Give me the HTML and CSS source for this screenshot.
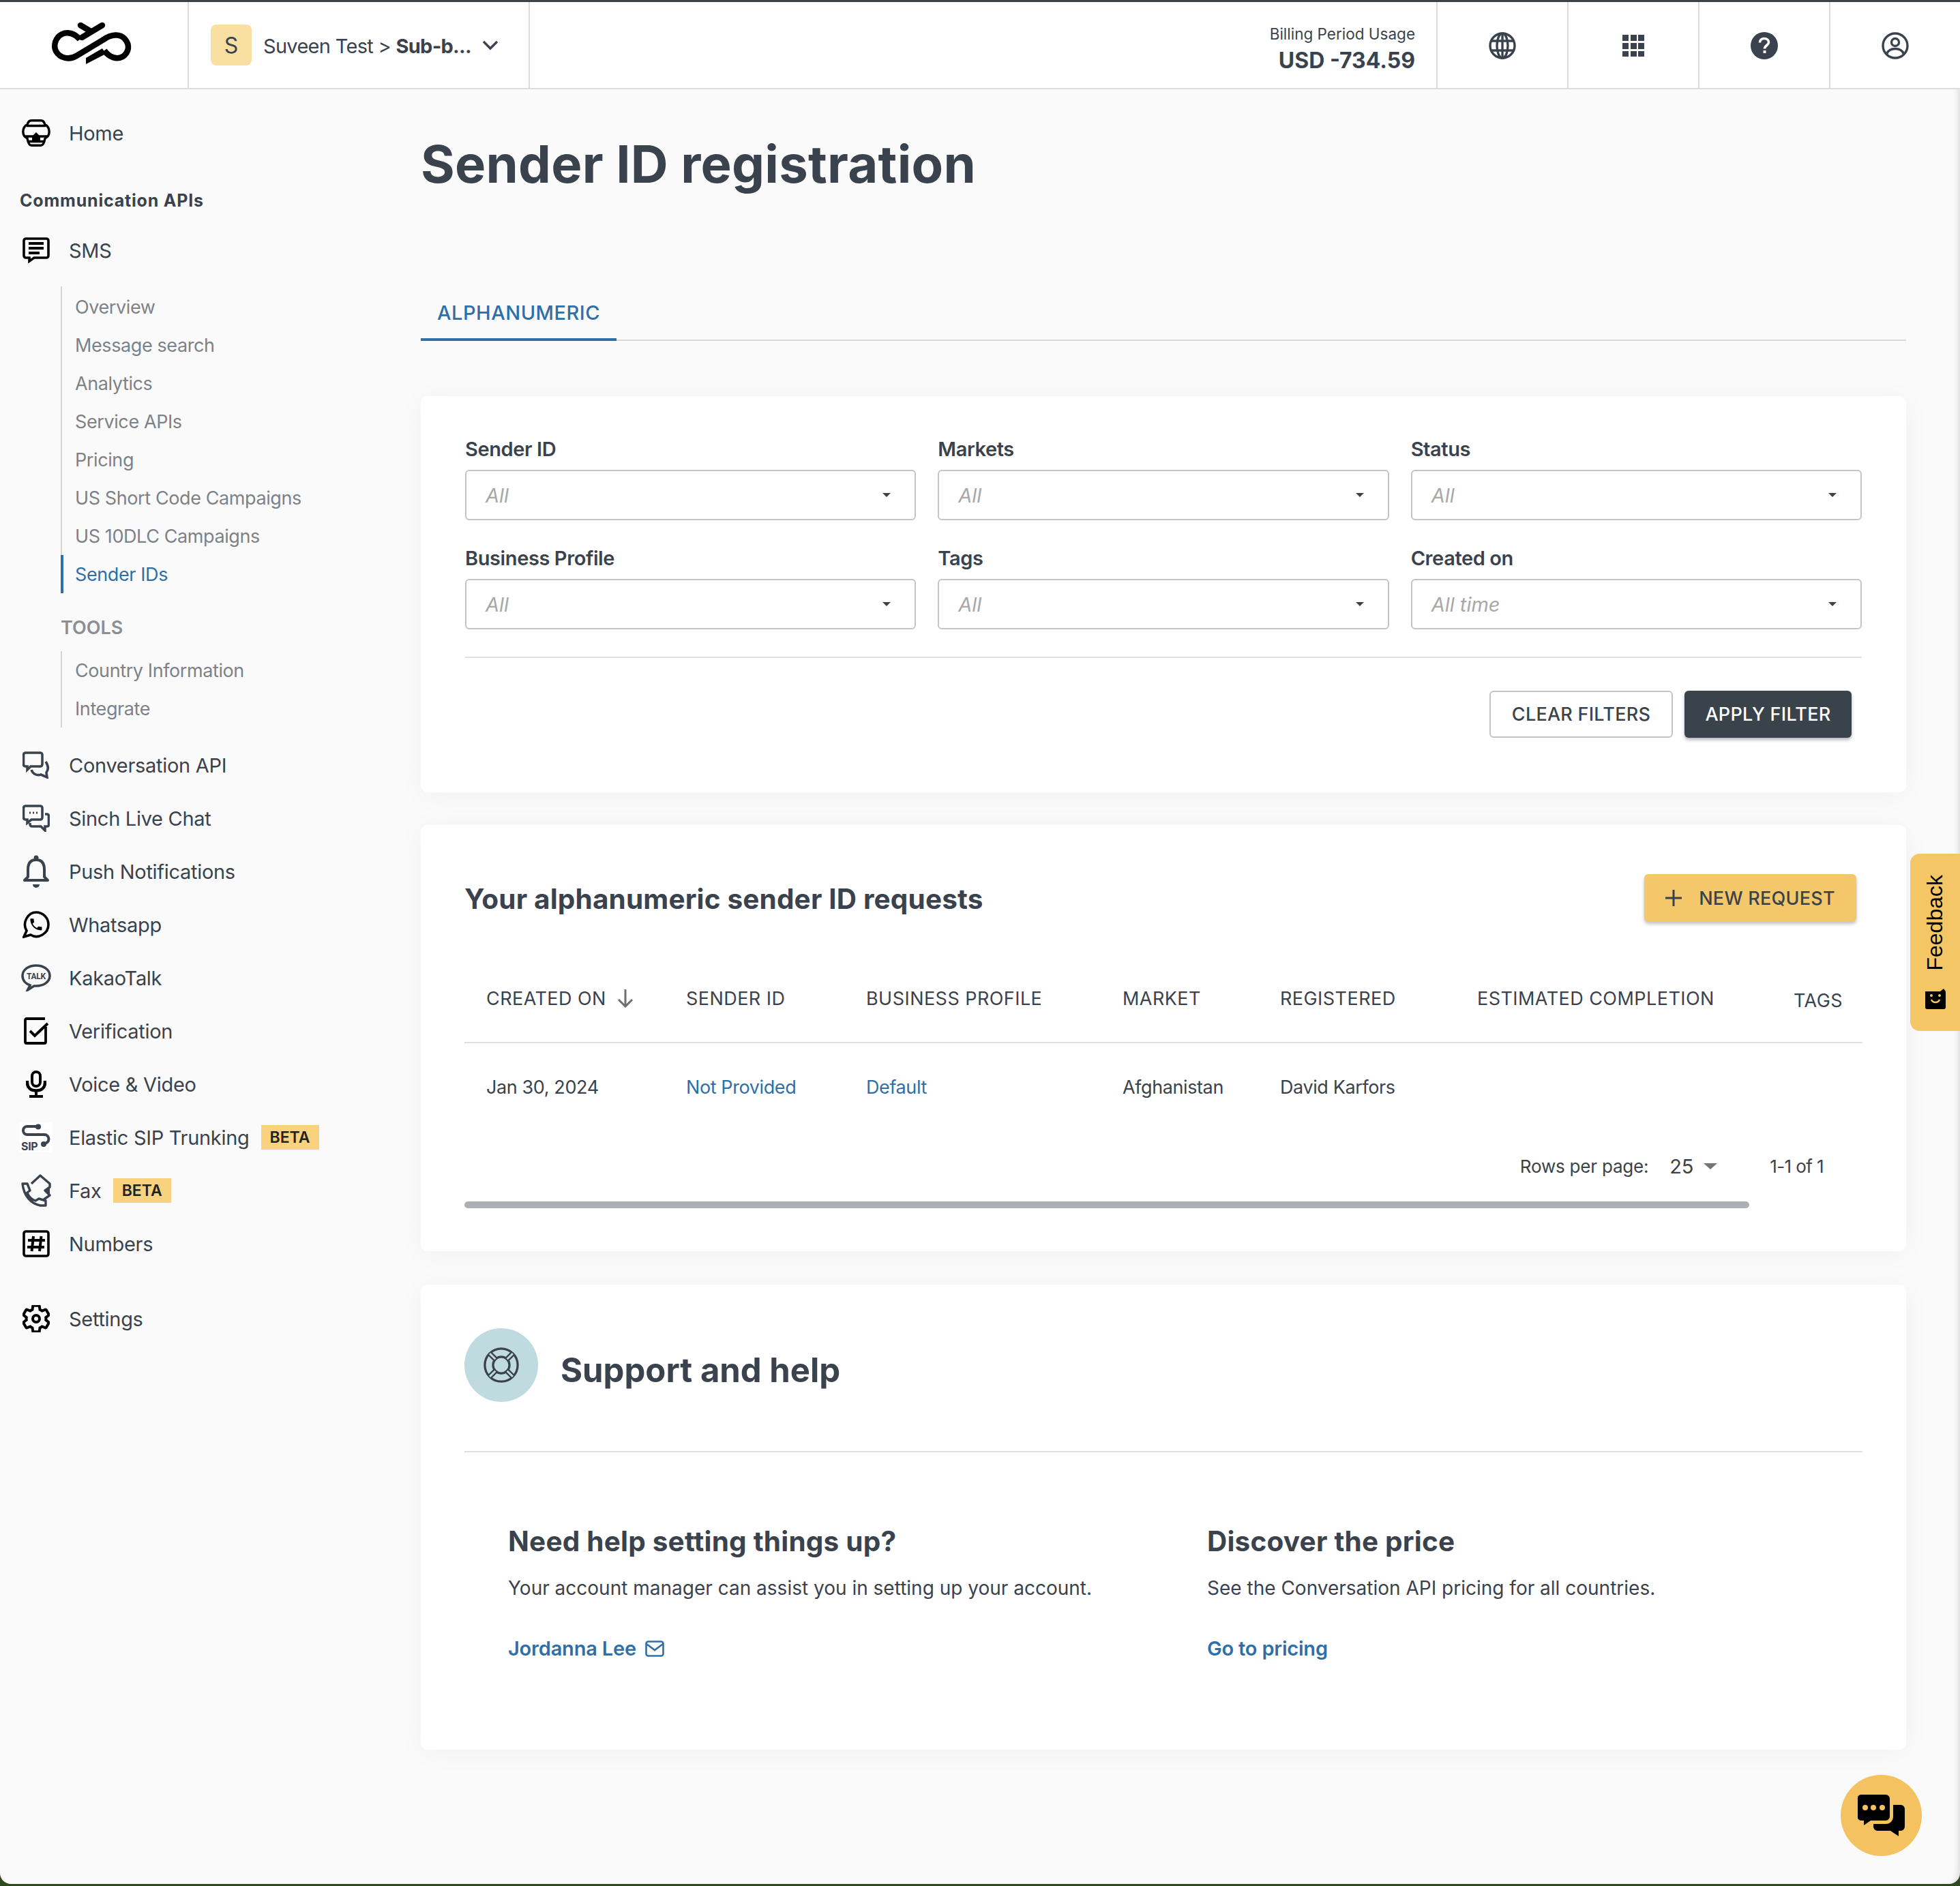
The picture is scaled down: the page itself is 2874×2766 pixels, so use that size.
FILE: index.html
```html
<!DOCTYPE html>
<html lang="en">
<head>
  <meta charset="UTF-8">
  <title>Sender ID registration</title>
  <link rel="stylesheet" href="styles.css">
</head>
<body>
<div class="app">
  <header class="topbar">
    <div class="logo-cell">
      <svg class="logo" viewBox="0 0 160 90" width="160" height="90" fill="none" stroke="#000" stroke-width="8.500">
        <path d="M59 36C52 27 41 24 33 28C23 33 20 45 24 53C30 64 44 66 54 60L94 36C105 28 118 27 125 35C133 44 131 55 122 61C113 66 102 62 95 52"/>
        <path d="M92 15L62 33" stroke-linecap="round"/>
        <path d="M60 15L75 24" stroke-linecap="round"/>
        <path d="M68 63L92 49L97 57L68 72Z" fill="#000" stroke="none"/>
      </svg>
    </div>
    <div class="account-cell">
      <span class="account-avatar">S</span>
      <span class="account-name">Suveen Test &gt; <b>Sub-b...</b></span>
      <svg class="account-chevron" viewBox="0 0 24 16" width="24" height="16" fill="none" stroke="#3a434d" stroke-width="3.400"><path d="M2 3L12 13L22 3"/></svg>
    </div>
    <div class="usage">
      <div class="usage-label">Billing Period Usage</div>
      <div class="usage-value">USD -734.59</div>
    </div>
    <div class="top-icon">
      <svg viewBox="0 0 40 40" width="40" height="40" fill="none" stroke="#3a434d" stroke-width="3.400"><circle cx="20" cy="20" r="18"/><ellipse cx="20" cy="20" rx="8" ry="18"/><path d="M3 13H37M3 27H37M20 2V38"/></svg>
    </div>
    <div class="top-icon">
      <svg viewBox="0 0 32 32" width="32" height="32" fill="#3a434d"><rect width="9" height="9"/><rect x="12" width="9" height="9"/><rect x="23" width="9" height="9"/><rect y="12" width="9" height="9"/><rect x="12" y="12" width="9" height="9"/><rect x="23" y="12" width="9" height="9"/><rect y="24" width="9" height="8"/><rect x="12" y="24" width="9" height="8"/><rect x="23" y="24" width="9" height="8"/></svg>
    </div>
    <div class="top-icon">
      <svg viewBox="0 0 40 40" width="40" height="40"><circle cx="20" cy="20" r="20" fill="#3a434d"/><path d="M13.500 15.500C13.500 11.500 16.500 9.500 20 9.500C24 9.500 26.500 12 26.500 15C26.500 19.500 20.500 19.500 20.500 24.500" fill="none" stroke="#fff" stroke-width="3.600"/><rect x="18.500" y="27" width="4" height="4" fill="#fff"/></svg>
    </div>
    <div class="top-icon">
      <svg viewBox="0 0 40 40" width="40" height="40" fill="none" stroke="#3a434d" stroke-width="3.400"><circle cx="20" cy="20" r="18"/><circle cx="20" cy="15" r="5.500"/><path d="M7.500 32C10 26 15 24.500 20 24.500C25 24.500 30 26 32.500 32"/></svg>
    </div>
  </header>

  <div class="body-row">
    <nav class="sidebar">
      <a class="nav-item">
        <span class="nav-icon">
          <svg viewBox="0 0 42 40" width="42" height="40" fill="none" stroke="#000" stroke-width="3.400"><path d="M14 1.800H28C31 1.800 33 4 34 8C38 9 40.200 14 40.200 18C40.200 22 38 26 34 28C33 34 31 38.200 28 38.200H14C11 38.200 9 34 8 28C4 26 1.800 22 1.800 18C1.800 14 4 9 8 8C9 4 11 1.800 14 1.800Z"/><path d="M7 9.500H35M5 25H37M9 32.500H33"/><path d="M15 33V25L21 19L27 25V33Z" fill="#000" stroke="none"/></svg>
        </span>
        Home
      </a>
      <h4 class="nav-heading">Communication APIs</h4>
      <a class="nav-item">
        <span class="nav-icon">
          <svg viewBox="0 0 40 38" width="40" height="38" fill="none" stroke="#000" stroke-width="3.600"><path d="M5 2H35A3 3 0 0 1 38 5V27A3 3 0 0 1 35 30H17L10 35V30H5A3 3 0 0 1 2 27V5A3 3 0 0 1 5 2Z"/><path d="M9 9H31M9 16H31M9 23H25" stroke-width="3.800"/></svg>
        </span>
        SMS
      </a>
      <div class="subnav subnav-sms">
        <a class="sub-item">Overview</a>
        <a class="sub-item">Message search</a>
        <a class="sub-item">Analytics</a>
        <a class="sub-item">Service APIs</a>
        <a class="sub-item">Pricing</a>
        <a class="sub-item">US Short Code Campaigns</a>
        <a class="sub-item">US 10DLC Campaigns</a>
        <a class="sub-item active">Sender IDs</a>
      </div>
      <div class="tools-label">TOOLS</div>
      <div class="subnav">
        <a class="sub-item">Country Information</a>
        <a class="sub-item">Integrate</a>
      </div>
      <div class="nav-group">
        <a class="nav-item">
          <span class="nav-icon">
            <svg viewBox="0 0 40 40" width="40" height="40" fill="none" stroke="#3a434d" stroke-width="3.600"><path d="M4 2H26A3 3 0 0 1 29 5V19A3 3 0 0 1 26 22H12L7 27V22H4A3 3 0 0 1 1.500 19V5A3 3 0 0 1 4 2Z"/><path d="M13 27C15 33 21 36 27 34L36 38L35 31C38 27 38 21 34 15"/></svg>
          </span>
          Conversation API
        </a>
        <a class="nav-item">
          <span class="nav-icon">
            <svg viewBox="0 0 40 40" width="40" height="40" fill="none" stroke="#3a434d" stroke-width="3.600"><path d="M4 2H26A3 3 0 0 1 29 5V19A3 3 0 0 1 26 22H13L7 27V22H4A3 3 0 0 1 1.500 19V5A3 3 0 0 1 4 2Z"/><path d="M10 12H12M15 12H17M20 12H22" stroke-width="3"/><path d="M33 14H36A2.500 2.500 0 0 1 38.500 16.500V30A2.500 2.500 0 0 1 36 32H33V38L27 32H14A3 3 0 0 1 11 29V27"/></svg>
          </span>
          Sinch Live Chat
        </a>
        <a class="nav-item">
          <span class="nav-icon">
            <svg viewBox="0 0 38 48" width="38" height="48" fill="none" stroke="#3a434d" stroke-width="4"><path d="M19 7C10 7 7 13 7 21V32L2 37H36L31 32V21C31 13 28 7 19 7Z" stroke-linejoin="round"/><circle cx="19" cy="4" r="3.500" fill="#3a434d" stroke="none"/><path d="M14 43H24A5 5 0 0 1 14 43Z" fill="#3a434d" stroke="none"/></svg>
          </span>
          Push Notifications
        </a>
        <a class="nav-item">
          <span class="nav-icon">
            <svg viewBox="0 0 40 40" width="40" height="40"><path d="M6 29C-1 17 8 2 20 2C30 2 38 10 38 20C38 33 23 42 12 35L2 38Z" fill="none" stroke="#000" stroke-width="3.600"/><path transform="translate(8.500 8.500) scale(.95)" d="M6.620 10.790c1.440 2.830 3.760 5.140 6.590 6.590l2.200-2.200c.27-.27.67-.36 1.020-.24 1.120.37 2.330.57 3.570.57.550 0 1 .45 1 1V20c0 .55-.45 1-1 1-9.390 0-17-7.610-17-17 0-.55.45-1 1-1h3.500c.55 0 1 .45 1 1 0 1.250.2 2.450.57 3.570.11.35.03.74-.25 1.020l-2.200 2.200z"/></svg>
          </span>
          Whatsapp
        </a>
        <a class="nav-item">
          <span class="nav-icon">
            <svg viewBox="0 0 44 40" width="44" height="40"><path d="M22 2C11 2 2 8 2 17C2 24 7 29 13 31L9.500 38L19 32H22C33 32 42 26 42 17C42 8 33 2 22 2Z" fill="none" stroke="#3a434d" stroke-width="3.600"/><text class="kakao-text" x="22" y="21.500" text-anchor="middle">TALK</text></svg>
          </span>
          KakaoTalk
        </a>
        <a class="nav-item">
          <span class="nav-icon">
            <svg class="check-icon" viewBox="0 0 38 40" width="38" height="40" fill="none" stroke="#000" stroke-width="3.800"><path d="M32 14V36A2 2 0 0 1 30 38H4A2 2 0 0 1 2 36V4A2 2 0 0 1 4 2H31"/><path d="M9 20L16 27L35 9" stroke-width="4"/></svg>
          </span>
          Verification
        </a>
        <a class="nav-item">
          <span class="nav-icon">
            <svg viewBox="0 0 30 40" width="30" height="40"><path d="M15 0A8 8 0 0 0 7 8V17A8 8 0 0 0 23 17V8A8 8 0 0 0 15 0ZM15 4A4 4 0 0 1 19 8V17A4 4 0 0 1 11 17V8A4 4 0 0 1 15 4Z"/><path d="M2 15V18C2 26 8 29.500 15 29.500C22 29.500 28 26 28 18V15" fill="none" stroke="#000" stroke-width="4.500"/><path d="M13 28H17V36H25V40H5V36H13Z"/></svg>
          </span>
          Voice &amp; Video
        </a>
        <a class="nav-item">
          <span class="nav-icon">
            <svg class="sip-icon" viewBox="0 0 48 44" width="48" height="44"><path d="M25 6H11A6 6 0 0 0 11 18H36A6.500 6.500 0 0 1 36 31H34" fill="none" stroke="#3a434d" stroke-width="4"/><circle cx="27" cy="6.500" r="4" fill="#3a434d"/><circle cx="35" cy="32" r="4" fill="#3a434d"/><text class="sip-text" x="2" y="41">SIP</text></svg>
          </span>
          Elastic SIP Trunking
          <span class="beta">BETA</span>
        </a>
        <a class="nav-item">
          <span class="nav-icon">
            <svg viewBox="0 0 44 48" width="44" height="48" fill="none" stroke="#3a434d" stroke-width="3.400"><path d="M15 14L28 2L42 14V19L35 24L42 31L32 38" stroke-linejoin="round"/><path d="M35 24L42 18V31Z" fill="#3a434d" stroke="none"/><path d="M2 14H9L13 24L9 27C11 33 15 37 21 39L26 36L36 39V46H28C14 43 4 32 2 14Z" stroke-linejoin="round"/></svg>
          </span>
          Fax
          <span class="beta">BETA</span>
        </a>
        <a class="nav-item">
          <span class="nav-icon">
            <svg viewBox="0 0 40 40" width="40" height="40" fill="none" stroke="#000"><rect x="2" y="2" width="36" height="36" rx="3" stroke-width="3.600"/><path d="M16 9L13.500 31M27.500 9L25 31M8 15H33M7 25H32" stroke-width="4"/></svg>
          </span>
          Numbers
        </a>
      </div>
      <a class="nav-item nav-settings">
        <span class="nav-icon">
          <svg viewBox="2 2 20 20" width="40" height="40" fill="none" stroke="#000" stroke-width="2"><path d="M19.140 12.940c.04-.3.06-.61.06-.94 0-.32-.02-.64-.07-.94l2.030-1.580c.18-.14.23-.41.12-.61l-1.920-3.320c-.12-.22-.37-.29-.59-.22l-2.390.96c-.5-.38-1.030-.7-1.620-.94l-.36-2.540c-.04-.24-.24-.41-.48-.41h-3.840c-.24 0-.43.17-.47.41l-.36 2.540c-.59.24-1.130.57-1.620.94l-2.390-.96c-.22-.08-.47 0-.59.22L2.740 8.870c-.12.21-.08.47.12.61l2.030 1.580c-.05.3-.09.63-.09.94s.02.64.07.94l-2.030 1.580c-.18.14-.23.41-.12.61l1.920 3.320c.12.22.37.29.59.22l2.390-.96c.5.38 1.030.7 1.620.94l.36 2.540c.05.24.24.41.48.41h3.840c.24 0 .44-.17.47-.41l.36-2.540c.59-.24 1.130-.56 1.620-.94l2.390.96c.22.08.47 0 .59-.22l1.920-3.320c.12-.22.07-.47-.12-.61l-2.010-1.580z"/><circle cx="12" cy="12" r="2.500"/></svg>
        </span>
        Settings
      </a>
    </nav>

    <main class="content">
      <h1 class="page-title">Sender ID registration</h1>
      <div class="tabs"><span class="tab">ALPHANUMERIC</span></div>

      <section class="card filter-card">
        <div class="filter-grid">
          <div class="field"><label>Sender ID</label><div class="select"><span>All</span><i class="caret"></i></div></div>
          <div class="field"><label>Markets</label><div class="select"><span>All</span><i class="caret"></i></div></div>
          <div class="field"><label>Status</label><div class="select"><span>All</span><i class="caret"></i></div></div>
          <div class="field"><label>Business Profile</label><div class="select"><span>All</span><i class="caret"></i></div></div>
          <div class="field"><label>Tags</label><div class="select"><span>All</span><i class="caret"></i></div></div>
          <div class="field"><label>Created on</label><div class="select"><span>All time</span><i class="caret"></i></div></div>
        </div>
        <div class="filter-actions">
          <button class="btn btn-outline">CLEAR FILTERS</button>
          <button class="btn btn-dark">APPLY FILTER</button>
        </div>
      </section>

      <section class="card requests-card">
        <div class="requests-head">
          <h2 class="card-title">Your alphanumeric sender ID requests</h2>
          <button class="btn btn-yellow">
            <svg viewBox="0 0 24 24" width="24" height="24" fill="none" stroke="#3a434d" stroke-width="3"><path d="M12 0V24M0 12H24"/></svg>
            NEW REQUEST
          </button>
        </div>
        <table class="requests">
          <thead>
            <tr>
              <th class="col-created">CREATED ON
                <svg class="sort-arrow" viewBox="0 0 24 28" width="24" height="28" fill="none" stroke="#6f6f6f" stroke-width="3"><path d="M12 1V25M2 16L12 26L22 16"/></svg>
              </th>
              <th class="col-sender">SENDER ID</th>
              <th class="col-profile">BUSINESS PROFILE</th>
              <th class="col-market">MARKET</th>
              <th class="col-reg">REGISTERED</th>
              <th class="col-est">ESTIMATED COMPLETION</th>
              <th class="col-tags"><span class="tags-head">TAGS</span></th>
            </tr>
          </thead>
          <tbody>
            <tr>
              <td>Jan 30, 2024</td>
              <td><a class="link">Not Provided</a></td>
              <td><a class="link">Default</a></td>
              <td>Afghanistan</td>
              <td>David Karfors</td>
              <td></td>
              <td></td>
            </tr>
          </tbody>
        </table>
        <div class="pager">
          <span>Rows per page:</span>
          <span class="pager-size">25</span>
          <i class="pager-caret"></i>
          <span class="pager-range">1-1 of 1</span>
        </div>
        <div class="table-scroll"></div>
      </section>

      <section class="card support-card">
        <div class="support-head">
          <span class="support-circle">
            <svg viewBox="0 0 56 56" width="54" height="54" fill="none" stroke="#3a434d" stroke-width="3.400"><circle cx="28" cy="28" r="25"/><circle cx="28" cy="28" r="12.500"/><path d="M19 19L10.500 10.500M37 19L45.500 10.500M19 37L10.500 45.500M37 37L45.500 45.500" stroke-width="8"/><path d="M19 19L10.500 10.500M37 19L45.500 10.500M19 37L10.500 45.500M37 37L45.500 45.500" stroke="#c0dbe0" stroke-width="3"/></svg>
          </span>
          <h2 class="support-title">Support and help</h2>
        </div>
        <div class="support-cols">
          <div class="support-col">
            <h3>Need help setting things up?</h3>
            <p>Your account manager can assist you in setting up your account.</p>
            <a class="strong-link">Jordanna Lee
              <svg viewBox="0 0 28 24" width="28" height="24" fill="none" stroke="#2f6fa8" stroke-width="2.600"><rect x="1.500" y="1.500" width="25" height="21" rx="3"/><path d="M2 5L14 14L26 5"/></svg>
            </a>
          </div>
          <div class="support-col">
            <h3>Discover the price</h3>
            <p>See the Conversation API pricing for all countries.</p>
            <a class="strong-link">Go to pricing</a>
          </div>
        </div>
      </section>
    </main>
  </div>

  <div class="feedback-tab">
    <span class="feedback-text">Feedback</span>
    <svg viewBox="0 0 30 30" width="30" height="30"><path d="M0 3L4 0H27A3 3 0 0 1 30 3V27A3 3 0 0 1 27 30H4V8Z" transform="rotate(90 15 15)"/><path d="M9 16A6.500 6.500 0 0 0 21 16" fill="none" stroke="#f4c666" stroke-width="2.400"/><circle cx="9" cy="10" r="2" fill="#f4c666"/><circle cx="21" cy="10" r="2" fill="#f4c666"/></svg>
  </div>

  <div class="chat-bubble">
    <svg viewBox="0 0 70 62" width="70" height="62"><path d="M5 0H41A6 6 0 0 1 47 6V32A6 6 0 0 1 41 38H19L9 45V38H5A5 5 0 0 1 0 32V6A5 5 0 0 1 5 0Z"/><circle cx="11" cy="19" r="4" fill="#f4c261"/><circle cx="23" cy="19" r="4" fill="#f4c261"/><circle cx="36" cy="19" r="4" fill="#f4c261"/><path d="M52 15H63A6 6 0 0 1 69 21V47A6 6 0 0 1 63 53H60V61L48 53H29A6 6 0 0 1 23 47V43H41C48 43 52 38 52 32Z"/></svg>
  </div>
</div>
</body>
</html>
```

FILE: styles.css
```css
* {
  box-sizing: border-box;
}

html, body {
  margin: 0;
  height: 100%;
}

body {
  background-color: #2f4a1e;
  color: #3a434d;
  font-family: "Inter", "Liberation Sans", sans-serif;
  font-size: 28px;
  overflow: hidden;
}

.app {
  position: relative;
  height: 2763px;
  background-color: #fafafa;
  border-top: 3px solid #3f4246;
  border-radius: 0 0 16px 16px;
  overflow: hidden;
  box-shadow: inset -8px 0 10px -6px rgba(0, 0, 0, 0.14);
}

/* top bar */
.topbar {
  display: flex;
  align-items: stretch;
  height: 128px;
  background-color: #fff;
  border-bottom: 2px solid #dcdcdc;
}

.logo-cell {
  display: flex;
  align-items: center;
  justify-content: center;
  width: 277px;
  padding-top: 2px;
  border-right: 2px solid #dcdcdc;
}

.logo {
  margin-left: 0;
}

.account-cell {
  display: flex;
  align-items: center;
  width: 500px;
  padding-left: 32px;
  border-right: 2px solid #dcdcdc;
}

.account-avatar {
  display: flex;
  align-items: center;
  justify-content: center;
  width: 60px;
  height: 60px;
  margin-right: 17px;
  background-color: #f9dfa2;
  border-radius: 8px;
  font-size: 32px;
}

.account-name {
  padding-top: 2px;
  font-size: 29px;
  letter-spacing: -0.7px;
  white-space: nowrap;
}

.account-name b {
  font-weight: 700;
}

.account-chevron {
  margin-left: 16px;
}

.usage {
  flex: 1;
  padding: 30px 31px 0 0;
  text-align: right;
}

.usage-label {
  font-size: 22.500px;
  line-height: 34px;
}

.usage-value {
  font-size: 32px;
  font-weight: 700;
  line-height: 44px;
}

.top-icon {
  display: flex;
  align-items: center;
  justify-content: center;
  width: 192px;
  padding-top: 2px;
  border-left: 2px solid #dcdcdc;
}

/* sidebar */
.body-row {
  display: flex;
}

.sidebar {
  flex: none;
  width: 617px;
  padding-top: 25px;
}

.nav-item {
  display: flex;
  align-items: center;
  height: 78px;
  padding-left: 29px;
  font-size: 29px;
  letter-spacing: -0.3px;
  white-space: nowrap;
}

.nav-icon {
  display: flex;
  align-items: center;
  justify-content: center;
  flex: none;
  width: 48px;
  height: 48px;
  margin-right: 24px;
}

.check-icon {
  margin-left: 2px;
}

.kakao-text {
  font-family: "Roboto", sans-serif;
  font-size: 12px;
  font-weight: 700;
  fill: #3a434d;
}

.sip-text {
  font-family: "Inter", sans-serif;
  font-size: 16px;
  font-weight: 700;
  fill: #3a434d;
}

.sip-icon {
  background-color: #fff;
}

.beta {
  display: inline-block;
  margin-left: 17px;
  padding: 0 13px;
  background-color: #f8d27f;
  color: #222;
  font-size: 23px;
  font-weight: 600;
  letter-spacing: 0;
  line-height: 36px;
}

.nav-heading {
  margin: 40px 0 14px;
  padding-left: 29px;
  font-size: 25px;
  font-weight: 700;
  letter-spacing: 0.8px;
  line-height: 40px;
}

.subnav {
  margin-left: 89px;
  border-left: 2px solid #d5d5d5;
}

.subnav-sms {
  margin-top: 14px;
  padding-top: 2px;
}

.sub-item {
  display: flex;
  align-items: center;
  height: 56px;
  margin-left: -2px;
  padding-left: 19px;
  border-left: 2px solid transparent;
  color: #7c8288;
  font-size: 27px;
  letter-spacing: -0.4px;
  white-space: nowrap;
}

.sub-item.active {
  border-left: 4px solid #2f6fa8;
  padding-left: 17px;
  color: #2f6fa8;
}

.tools-label {
  margin: 31px 0 14px 89px;
  color: #8a8f94;
  font-size: 27px;
  font-weight: 600;
  line-height: 40px;
}

.nav-group {
  margin-top: 16px;
}

.nav-settings {
  margin-top: 32px;
}

/* main column */
.content {
  flex: 1;
  min-width: 0;
  padding: 61px 79px 0 0;
}

.page-title {
  margin: 0 0 129px;
  font-size: 76px;
  font-weight: 700;
  letter-spacing: 0.25px;
  line-height: 96px;
}

.tabs {
  height: 83px;
  margin-bottom: 81px;
  border-bottom: 2px solid #d8d8d8;
}

.tab {
  display: inline-block;
  height: 83px;
  padding: 24px 24px 0;
  border-bottom: 4px solid #2f6fa8;
  color: #2f6fa8;
  font-size: 29px;
  font-weight: 500;
  letter-spacing: 0.5px;
  line-height: 36px;
}

.card {
  background-color: #fff;
  border-radius: 10px;
  box-shadow: 0 4px 40px rgba(0, 0, 0, 0.04);
}

.filter-card {
  height: 581px;
  margin-bottom: 48px;
  padding: 59px 65px 0 65px;
}

.filter-grid {
  display: grid;
  grid-template-columns: repeat(3, 1fr);
  column-gap: 32px;
  row-gap: 37px;
  padding-bottom: 40px;
  border-bottom: 2px solid #e0e0e0;
}

.field label {
  display: block;
  margin-bottom: 11px;
  font-size: 29px;
  font-weight: 600;
  letter-spacing: -0.4px;
  line-height: 38px;
}

.select {
  display: flex;
  align-items: center;
  justify-content: space-between;
  height: 74px;
  padding: 0 34px 0 28px;
  border: 2px solid #c4c4c4;
  border-radius: 6px;
  color: #a8a8a8;
  font-size: 29px;
  font-style: italic;
}

.caret {
  width: 0;
  height: 0;
  margin-right: 1px;
  border-left: 6px solid transparent;
  border-right: 6px solid transparent;
  border-top: 6px solid #3a434d;
}

.filter-actions {
  display: flex;
  justify-content: flex-end;
  gap: 17px;
  padding: 48px 15px 0 0;
}

.btn {
  display: flex;
  align-items: center;
  justify-content: center;
  height: 69px;
  border-radius: 6px;
  font-family: inherit;
  font-size: 27px;
  font-weight: 500;
  letter-spacing: 0.25px;
}

.btn-outline {
  width: 269px;
  background-color: #fff;
  border: 2px solid #c4c4c4;
  color: #3a434d;
}

.btn-dark {
  width: 245px;
  background-color: #3a424c;
  border: none;
  color: #fff;
  box-shadow: 0 3px 5px rgba(0, 0, 0, 0.3);
}

.btn-yellow {
  gap: 25px;
  width: 311px;
  height: 70px;
  background-color: #f4c76a;
  border: none;
  color: #3a434d;
  box-shadow: 0 3px 5px rgba(0, 0, 0, 0.25);
}

.requests-card {
  height: 625px;
  margin-bottom: 49px;
  padding: 72px 64px 0 64px;
}

.requests-head {
  display: flex;
  align-items: center;
  justify-content: space-between;
  padding-right: 9px;
  margin-bottom: 49px;
}

.card-title {
  margin: 3px 0 0;
  font-size: 40.500px;
  font-weight: 700;
  letter-spacing: 0.15px;
}

.requests {
  width: 100%;
  border-collapse: collapse;
  table-layout: fixed;
}

.requests th {
  height: 128px;
  padding: 0 0 0 33px;
  border-bottom: 2px solid #e0e0e0;
  font-size: 27px;
  font-weight: 400;
  letter-spacing: 0.45px;
  text-align: left;
  white-space: nowrap;
}

.requests th:first-child,
.requests td:first-child {
  padding-left: 32px;
}

.requests td {
  height: 126px;
  padding: 3px 0 0 33px;
  font-size: 27px;
  letter-spacing: -0.4px;
  white-space: nowrap;
}

.col-created { width: 292px; }
.col-sender { width: 264px; }
.col-profile { width: 376px; }
.col-market { width: 231px; }
.col-reg { width: 289px; }
.col-est { width: 464px; }

.sort-arrow {
  margin-left: 8px;
  vertical-align: -4px;
}

.tags-head {
  position: relative;
  top: 3px;
}

.link {
  color: #2f6fa8;
}

.pager {
  display: flex;
  align-items: center;
  justify-content: flex-end;
  height: 60px;
  margin-top: 25px;
  padding-right: 57px;
  font-size: 26px;
  letter-spacing: -0.2px;
}

.pager-size {
  margin-left: 31px;
  font-size: 29px;
}

.pager-caret {
  width: 0;
  height: 0;
  margin-left: 15px;
  border-left: 10px solid transparent;
  border-right: 10px solid transparent;
  border-top: 9px solid #757575;
}

.pager-range {
  margin-left: 77px;
  letter-spacing: -0.6px;
}

.table-scroll {
  width: 1884px;
  height: 10px;
  margin-top: 22px;
  background-color: #adafb3;
  border-radius: 5px;
}

.support-card {
  height: 682px;
  padding: 64px 64px 0 64px;
}

.support-head {
  display: flex;
  align-items: center;
  gap: 33px;
  height: 182px;
  padding-bottom: 72px;
  border-bottom: 2px solid #e0e0e0;
}

.support-circle {
  display: flex;
  align-items: center;
  justify-content: center;
  flex: none;
  width: 108px;
  height: 108px;
  background-color: #c0dbe0;
  border-radius: 50%;
}

.support-title {
  margin: 14px 0 0;
  font-size: 49px;
  font-weight: 700;
}

.support-cols {
  display: grid;
  grid-template-columns: 1025px 1fr;
  padding: 106px 0 0 64px;
}

.support-col h3 {
  margin: 0 0 24px;
  font-size: 40.500px;
  font-weight: 700;
  letter-spacing: 0.2px;
  line-height: 50px;
}

.support-col p {
  margin: 0 0 52px;
  font-size: 28px;
  line-height: 38px;
}

.strong-link {
  display: flex;
  align-items: center;
  gap: 13px;
  color: #2f6fa8;
  font-size: 29px;
  font-weight: 600;
  letter-spacing: -0.2px;
  line-height: 36px;
}

/* floating bits */
.feedback-tab {
  position: absolute;
  top: 1249px;
  right: 0;
  display: flex;
  flex-direction: column;
  align-items: center;
  justify-content: flex-end;
  gap: 26px;
  width: 73px;
  height: 260px;
  padding-bottom: 32px;
  background-color: #f4c666;
  border-radius: 14px 0 0 14px;
  color: #000;
}

.feedback-text {
  font-family: "Liberation Sans", sans-serif;
  font-size: 32px;
  transform: rotate(180deg);
  writing-mode: vertical-rl;
}

.chat-bubble {
  position: absolute;
  left: 2699px;
  top: 2600px;
  display: flex;
  align-items: center;
  justify-content: center;
  width: 119px;
  height: 119px;
  background-color: #f4c261;
  border-radius: 50%;
}
```
